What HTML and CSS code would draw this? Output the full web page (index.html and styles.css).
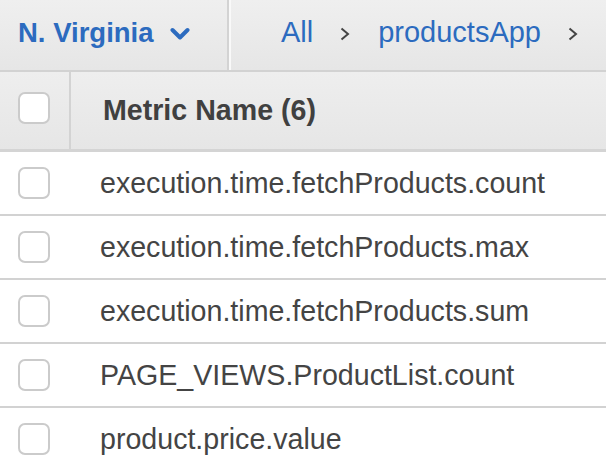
FILE: index.html
```html
<!DOCTYPE html>
<html>
<head>
<meta charset="utf-8">
<link rel="stylesheet" href="styles.css">
</head>
<body>
<div class="topbar">
  <div class="region">
    <span class="region-name">N. Virginia</span>
    <svg class="caret" width="20" height="14" viewBox="0 0 20 14"><polyline points="2.5,3 10,10.5 17.5,3" fill="none" stroke="#2c6bbf" stroke-width="4" stroke-linecap="round" stroke-linejoin="round"/></svg>
  </div>
  <div class="crumbs">
    <span class="crumb">All</span>
    <svg class="sep" width="10" height="14" viewBox="0 0 10 14"><polyline points="1.5,1.5 8,7 1.5,12.5" fill="none" stroke="#444" stroke-width="2"/></svg>
    <span class="crumb">productsApp</span>
    <svg class="sep" width="10" height="14" viewBox="0 0 10 14"><polyline points="1.5,1.5 8,7 1.5,12.5" fill="none" stroke="#444" stroke-width="2"/></svg>
  </div>
</div>
<div class="thead">
  <div class="cell-check"><span class="box"></span></div>
  <div class="cell-name">Metric Name (6)</div>
</div>
<div class="row"><div class="row-check"><span class="box"></span></div><div class="row-name">execution.time.fetchProducts.count</div></div>
<div class="row"><div class="row-check"><span class="box"></span></div><div class="row-name">execution.time.fetchProducts.max</div></div>
<div class="row"><div class="row-check"><span class="box"></span></div><div class="row-name">execution.time.fetchProducts.sum</div></div>
<div class="row"><div class="row-check"><span class="box"></span></div><div class="row-name">PAGE_VIEWS.ProductList.count</div></div>
<div class="row"><div class="row-check"><span class="box"></span></div><div class="row-name">product.price.value</div></div>
</body>
</html>
```
FILE: styles.css
```css
html, body {
  margin: 0;
  padding: 0;
  background: #fff;
  font-family: "Liberation Sans", Arial, sans-serif;
  overflow: hidden;
}
.topbar {
  display: flex;
  height: 72px;
  box-sizing: border-box;
  border-bottom: 2px solid #d2d2d2;
  background: linear-gradient(#efefef, #e6e6e6);
}
.region {
  width: 233px;
  box-sizing: border-box;
  padding: 0 0 5px 18px;
  border-right: 2px solid #d3d3d3;
  display: flex;
  align-items: center;
}
.region-name {
  font-size: 27.5px;
  font-weight: bold;
  color: #2c6bbf;
}
.caret {
  margin-left: 16px;
  margin-top: 2px;
}
.crumbs {
  display: flex;
  align-items: center;
  padding: 0 0 5px 50px;
  border-left: 2px solid #f9f9f9;
}
.crumb {
  font-size: 29px;
  color: #2c6bbf;
}
.sep {
  margin: 2px 28px 0 27px;
}
.thead {
  display: flex;
  height: 80px;
  box-sizing: border-box;
  border-bottom: 3px solid #d4d4d4;
  background: linear-gradient(#eeeeee, #e6e6e6);
}
.cell-check {
  width: 71px;
  box-sizing: border-box;
  border-right: 2px solid #d3d3d3;
  display: flex;
  align-items: center;
  padding: 0 0 5px 18px;
}
.cell-name {
  display: flex;
  align-items: center;
  padding-left: 32px;
  font-size: 28.6px;
  font-weight: bold;
  color: #404040;
}
.box {
  display: block;
  width: 32px;
  height: 32px;
  box-sizing: border-box;
  border: 2px solid #cbcbcb;
  border-radius: 7px;
  background: #fff;
}
.row {
  display: flex;
  align-items: center;
  height: 64px;
  box-sizing: border-box;
  border-bottom: 2px solid #d2d2d2;
}
.row-check {
  width: 100px;
  box-sizing: border-box;
  padding-left: 18px;
}
.row-name {
  font-size: 28.6px;
  color: #444;
}
```
